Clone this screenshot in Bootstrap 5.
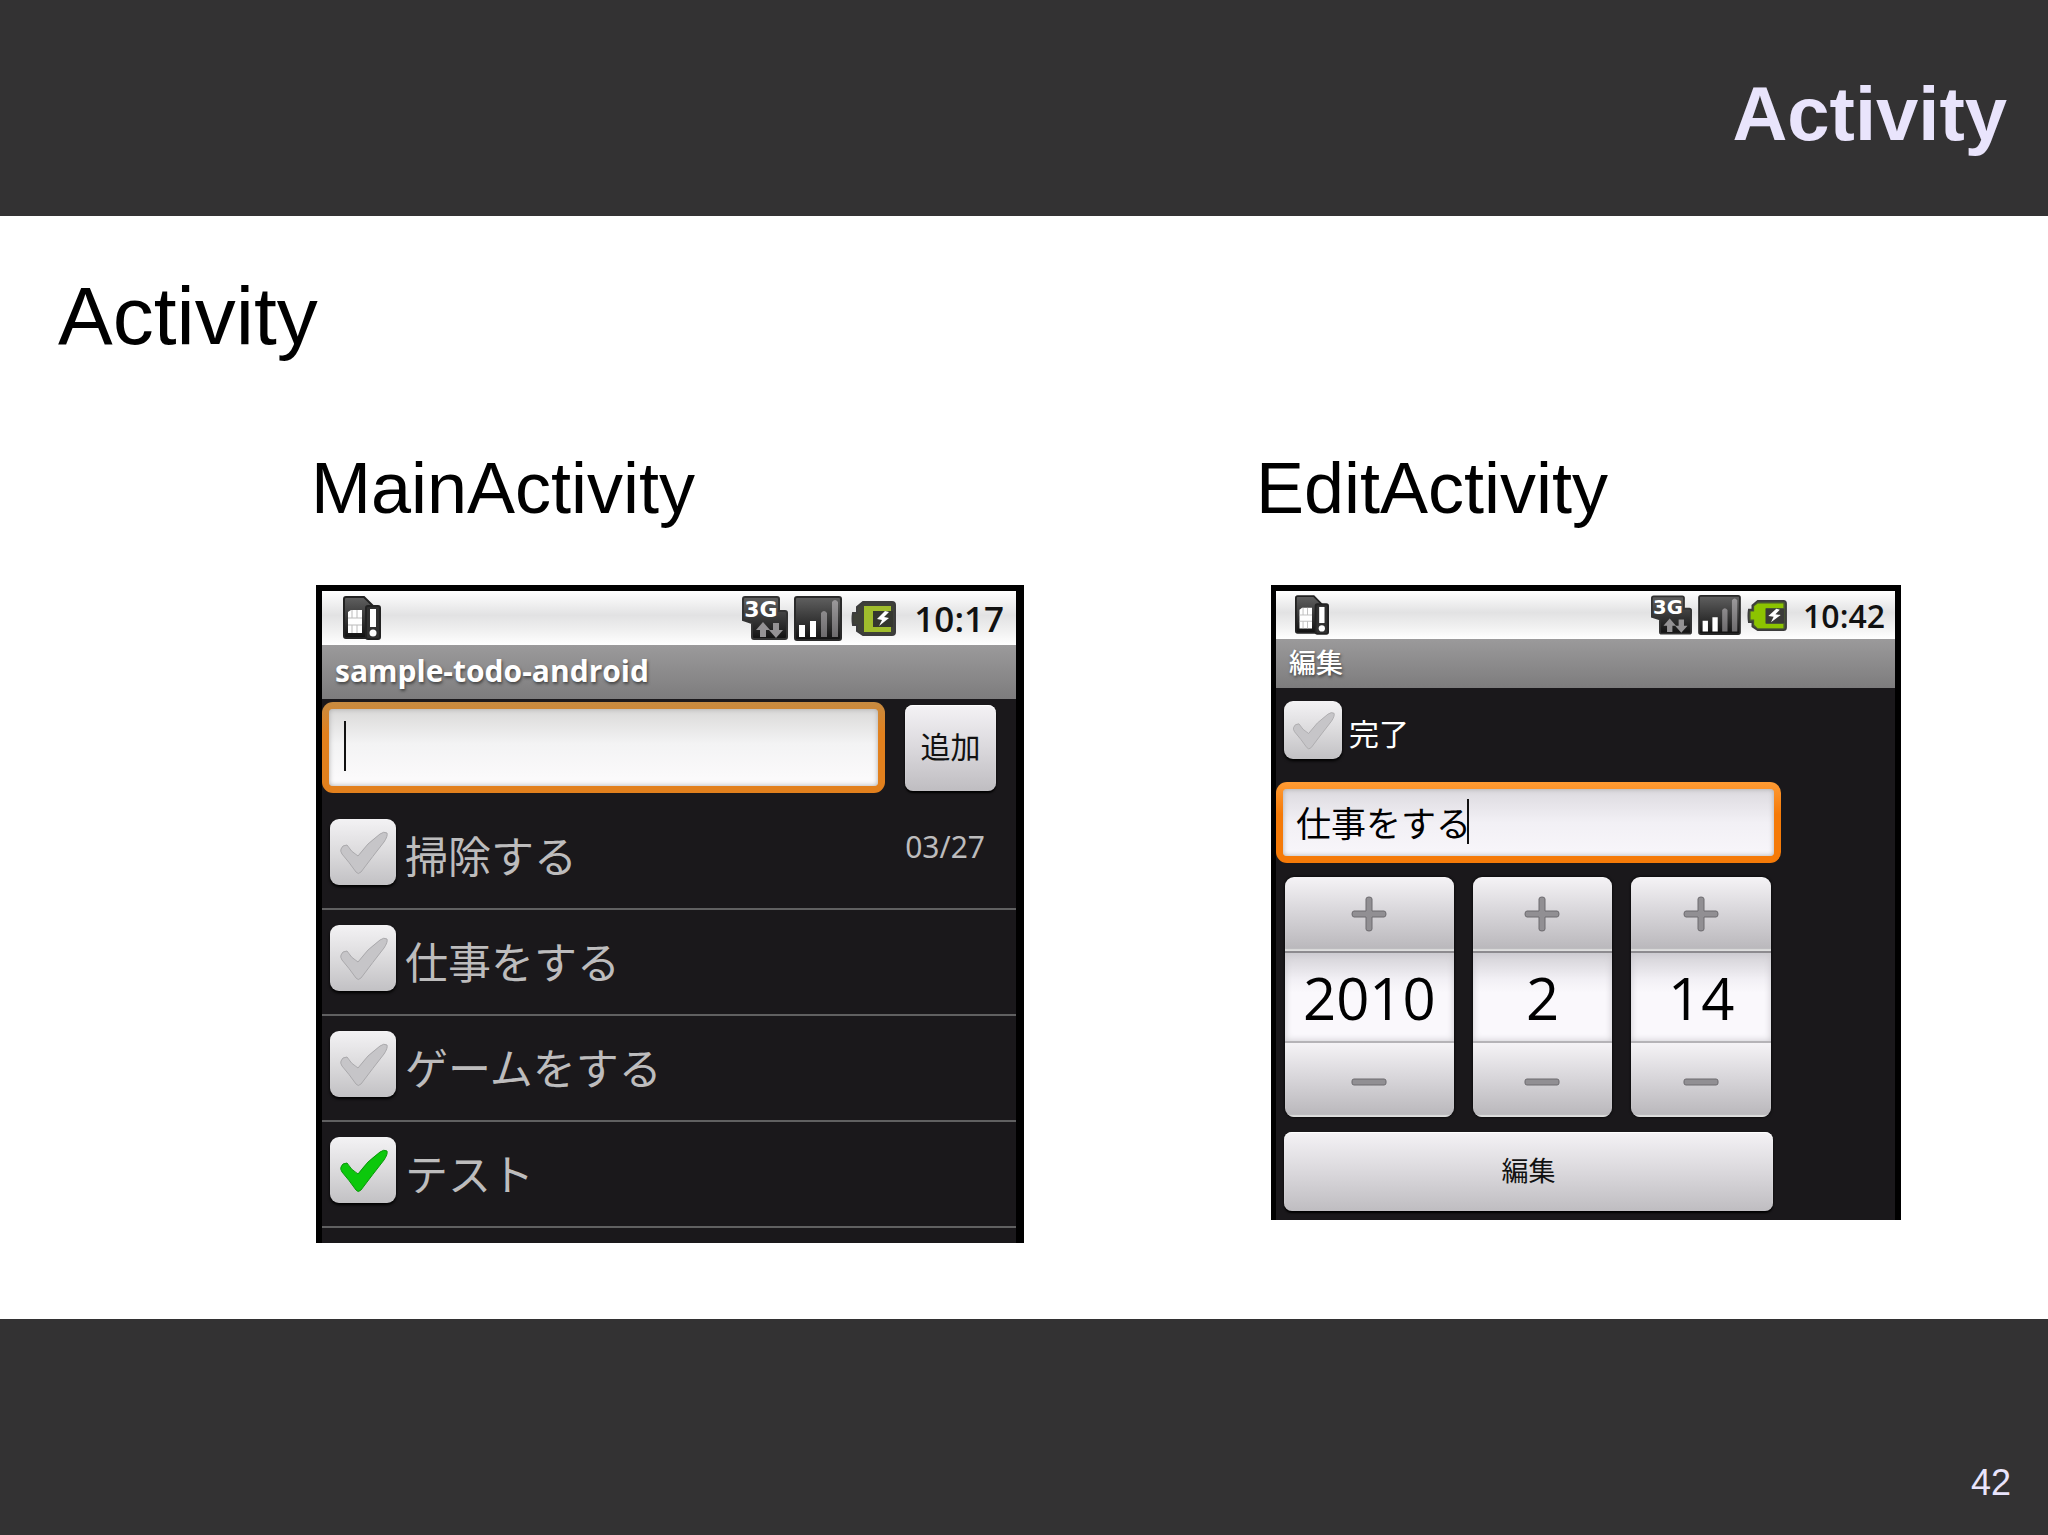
<!DOCTYPE html>
<html lang="ja">
<head>
<meta charset="utf-8">
<meta name="viewport" content="width=device-width, initial-scale=1">
<title>Activity</title>
<link href="https://cdn.jsdelivr.net/npm/bootstrap@5.3.0/dist/css/bootstrap.min.css" rel="stylesheet">
<style>
  body { font-family: "Liberation Sans", Arial, sans-serif; color: #000; background: #fff; }
  .band { background: #333233; color: #e9e4fc; min-height: 216px; }
  .band-top { padding: 70px 41px 0; }
  .band-top h1 { font-size: 76px; line-height: 88px; font-weight: 700; }
  .band-bottom { padding: 0 37px 32px; font-size: 36px; line-height: 40px; }
  .slide-title { font-size: 82px; line-height: 96px; font-weight: 400; padding: 52px 58px 0; margin-bottom: 82px; }
  .screens { padding: 0 147px 0 311px; gap: 232px; }
  .screen-main { flex: 713 1 0; min-width: 0; }
  .screen-edit { flex: 645 1 0; min-width: 0; }
  .caption-text { font-size: 72px; line-height: 84px; font-weight: 400; margin-bottom: 55px; }

  .phone { background: #1a181b; border: 6px solid #000; border-bottom: 0; color: #bdbcbd;
    font-family: "Noto Sans", "Noto Sans CJK JP", sans-serif; }
  .screen-main .phone { margin-left: 5px; border-right-width: 8px; padding-bottom: 15px; }
  .screen-edit .phone { margin-left: 15px; border-left-width: 5px; padding-bottom: 9px; }

  .status { background: linear-gradient(#fff, #e2e2e3 45%, #f1f1f1 75%, #fff); height: 54px; padding: 0 12px 0 21px; gap: 6px; color: #111; }
  .status time { font-family: "Open Sans", sans-serif; font-weight: 600; font-size: 35px; line-height: 40px; margin-left: 12px; padding-top: 2px; }
  .status svg { flex: none; }
  .screen-edit .status { height: 48px; padding: 0 10px 0 19px; }
  .screen-edit .status time { font-size: 32px; margin-left: 10px; }
  .app-title { background: linear-gradient(#9b9a9b, #7d7c7d); height: 54px; padding: 6px 13px 0; color: #fff; font-family: "Open Sans", "Noto Sans CJK JP", sans-serif;
    font-size: 30px; line-height: 40px; font-weight: 700; text-shadow: 1px 2px 3px #444; }
  .screen-edit .app-title { height: 49px; padding-top: 4px; font-size: 27px; font-weight: 500; }

  .entry { display: block; width: 100%; border: 7px solid transparent; border-radius: 11px; outline: 0; color: #000; padding: 0 13px;
    background: linear-gradient(#dad9d8, #f3f3f4 45%, #fbfafb 90%) padding-box, linear-gradient(#c78b41, #e2801d 35%, #e2801d) border-box;
    box-shadow: inset 0 0 5px #aaa; height: 91px; }
  .entry-hot { height: 81px; font-size: 35px; line-height: 48px; padding-bottom: 2px;
    background: linear-gradient(#dcdadf, #f2f0f5 50%, #f8f6fa) padding-box, linear-gradient(#ff9b34, #f57a08 40%, #f57a08) border-box; }
  .caret { position: absolute; width: 2px; background: #111; }
  .caret-a { left: 22px; top: 19px; height: 50px; }
  .caret-b { left: 191px; top: 17px; height: 45px; }
  .entry-row { padding: 3px 20px 0 0; gap: 20px; margin-bottom: 11px; }
  .key { border: 0; border-radius: 8px; color: #111; background: linear-gradient(#f4f2f5, #dddbdf 45%, #bfbdc1); box-shadow: 0 2px 2px #000, inset 0 1px 1px #fff; }
  .key-add { width: 91px; height: 86px; font-size: 30px; padding: 0 0 2px; }

  .task { height: 106px; padding: 0 31px 9px 8px; border-bottom: 2px solid #606061; }
  .task label { font-size: 43px; line-height: 52px; padding: 10px 0 0 9px; }
  .task time { font-size: 30px; line-height: 40px; margin-bottom: 9px; }
  .tick { position: relative; width: 66px; height: 66px; flex: none; }
  .tick input { appearance: none; display: block; width: 100%; height: 100%; margin: 0; border-radius: 9px;
    background: linear-gradient(#f3f2f4, #dcdbdd 50%, #c2c1c4); box-shadow: 0 2px 3px #000; }
  .tick svg { position: absolute; inset: 0; width: 100%; height: 100%; pointer-events: none; fill: #c6c5c8; stroke: #aaa9ac; stroke-width: 1; }
  .tick input:checked + svg { fill: #0cc80c; stroke: #0b970b; stroke-width: 1; }

  .done { padding: 13px 8px 0; margin-bottom: 23px; color: #fff; }
  .done .tick { width: 58px; height: 58px; }
  .done label { font-size: 30px; line-height: 40px; padding: 8px 0 0 7px; }
  .edit-form { width: 505px; max-width: 100%; }
  .pickers { padding: 14px 10px 15px 9px; gap: 19px; }
  .picker { flex: 140 1 0; min-width: 0; border-radius: 9px; overflow: hidden; box-shadow: 0 0 3px #000; }
  .picker-year { flex-grow: 169; }
  .picker button { border: 0; padding: 0; width: 100%; height: 74px; display: flex; align-items: center; justify-content: center;
    background: linear-gradient(#f5f3f6, #d9d7db 45%, #b8b6ba); box-shadow: inset 0 -2px 1px #ddd; }
  .picker button:last-child { padding-top: 4px; }
  .picker input { border: 0; width: 100%; height: 92px; padding: 0; text-align: center; font-family: "Open Sans", sans-serif; font-size: 58px; line-height: 80px; color: #000;
    border-top: 2px solid #8d8b8f; border-bottom: 2px solid #b5b3b7; border-radius: 0;
    background: linear-gradient(#d2d0d5, #f2f0f5 30%, #faf8fc 45%); box-shadow: inset 0 0 7px #c9c7cc; outline: 0; }
  .key-save { display: block; height: 79px; width: calc(100% - 16px); margin: 0 8px; font-size: 27px; padding: 0; }
  .status-gap { margin-left: 3px; }
  @media (max-width: 1200px) {
    .screens { flex-direction: column; padding: 0 24px 48px; gap: 48px; }
    .screen-main, .screen-edit { flex: none; }
  }
</style>
<script src="https://cdn.jsdelivr.net/npm/bootstrap@5.3.0/dist/js/bootstrap.bundle.min.js"></script>
</head>
<body class="d-flex flex-column min-vh-100">

<svg width="0" height="0" class="position-absolute" aria-hidden="true">
  <defs>
    <linearGradient id="ink" x1="0" y1="0" x2="0" y2="1"><stop offset="0" stop-color="#606060"/><stop offset="1" stop-color="#111"/></linearGradient>
    <linearGradient id="bar" x1="0" y1="0" x2="0" y2="1"><stop offset="0" stop-color="#9b999b"/><stop offset="1" stop-color="#6d6b6d"/></linearGradient>
    <symbol id="sim" viewBox="0 0 38 44">
      <path d="M3 1H21L30 10V42H3Q1 42 1 40V3Q1 1 3 1Z" fill="url(#ink)" stroke="#222" stroke-width="2"/>
      <rect x="23" y="10" width="14" height="33" rx="2" fill="#303030" stroke="#222" stroke-width="2"/>
      <path d="M5 16L8 14H19V37H5Z" fill="#fff"/>
      <path d="M5 22H19M5 29H19M9 14V22M14 14V22M9 29V37M14 29V37" stroke="#bbb" fill="none"/>
      <path d="M27 13H33V31H27Z" fill="#fff"/><circle cx="30" cy="37" r="3.500" fill="#fff"/>
    </symbol>
    <symbol id="net" viewBox="0 0 46 44">
      <path d="M3 1H35Q37 1 37 3V15H43Q45 15 45 17V41Q45 43 43 43H12Q10 43 10 41V27L1 24V3Q1 1 3 1Z" fill="url(#ink)" stroke="#333" stroke-width="2"/>
      <text x="19" y="21" text-anchor="middle" font-family="DejaVu Sans" font-weight="700" font-size="22" fill="#fff">3G</text>
      <path d="M21 26L28 34H24V41H18V34H14ZM34 42L27 34H31V27H37V34H41Z" fill="#949294"/>
    </symbol>
    <symbol id="signal" viewBox="0 0 48 45">
      <rect x="1" y="1" width="46" height="43" rx="2" fill="url(#ink)" stroke="#2a2a2a" stroke-width="2"/>
      <path d="M5 29H11V41H5ZM16 25H22V41H16Z" fill="#fff"/>
      <path d="M27 41V17Q30 13 33 17V41ZM38 41V6Q41 2 44 6V41Z" fill="url(#bar)"/>
    </symbol>
    <symbol id="battery-low" viewBox="0 0 45 35">
      <path d="M12 1H41Q44 1 44 4V31Q44 34 41 34H12L6 30V24H2Q1 18 2 12H6V6Z" fill="#3f4138" stroke="#3c3c3c" stroke-width="2"/>
      <path d="M13 5H40V10H22V26H40V31H13Z" fill="#a0bd2c"/>
      <path d="M22 10H42V26H22Z" fill="#35372f"/>
      <path d="M34 10L26 18L31 19L28 25L38 17L33 16L38 11Z" fill="#fff"/>
    </symbol>
    <symbol id="battery-full" viewBox="0 0 45 35">
      <path d="M12 1H41Q44 1 44 4V31Q44 34 41 34H12L6 30V25H2Q1 18 2 11H6V6Z" fill="#4b5a33" stroke="#3c3c3c" stroke-width="2"/>
      <path d="M12 4H41V9H21V27H41V32H12L8 28V22H4V13H8V7Z" fill="#8cc400"/>
      <path d="M21 10H42V26H21Z" fill="#3a3a38"/>
      <path d="M33 10L24 18L30 19L27 25L38 17L32 16L37 11Z" fill="#fff"/>
    </symbol>
    <symbol id="check" viewBox="0 0 66 66">
      <path d="M11 30Q12 26 17 26Q21 33 28 37Q37 24 50 15Q54 12 57 14Q58 17 54 23Q43 37 31 53Q28 56 26 53Q19 43 12 35Q10 32 11 30Z"/>
    </symbol>
    <symbol id="plus" viewBox="0 0 36 36">
      <path d="M15 3Q15 1 18 1Q21 1 21 3V15H33Q35 15 35 18Q35 21 33 21H21V33Q21 35 18 35Q15 35 15 33V21H3Q1 21 1 18Q1 15 3 15H15Z" fill="#918f93" stroke="#6d6b6f"/>
    </symbol>
    <symbol id="minus" viewBox="0 0 36 8">
      <rect x="1" y="1" width="34" height="6" rx="2" fill="#918f93" stroke="#6d6b6f"/>
    </symbol>
  </defs>
</svg>

<header class="band band-top text-end"><h1 class="mb-0">Activity</h1></header>

<main class="flex-grow-1">
  <h2 class="slide-title">Activity</h2>
  <div class="screens d-flex align-items-start">

    <section class="screen-main">
      <h3 class="caption-text">MainActivity</h3>
      <div class="phone">
        <div class="status d-flex align-items-center">
          <svg class="me-auto" width="38" height="44"><use href="#sim"/></svg>
          <svg width="46" height="44"><use href="#net"/></svg>
          <svg width="48" height="45"><use href="#signal"/></svg>
          <svg class="status-gap" width="45" height="35"><use href="#battery-low"/></svg>
          <time>10:17</time>
        </div>
        <div class="app-title">sample-todo-android</div>
        <form class="entry-row d-flex align-items-center">
          <div class="position-relative flex-grow-1">
            <input class="entry" type="text" aria-label="タスク">
            <span class="caret caret-a"></span>
          </div>
          <button class="key key-add" type="button">追加</button>
        </form>
        <ul class="list-unstyled mb-0">
          <li class="task d-flex align-items-center">
            <span class="tick"><input type="checkbox" id="t1"><svg><use href="#check"/></svg></span>
            <label for="t1">掃除する</label><time class="ms-auto">03/27</time>
          </li>
          <li class="task d-flex align-items-center">
            <span class="tick"><input type="checkbox" id="t2"><svg><use href="#check"/></svg></span>
            <label for="t2">仕事をする</label>
          </li>
          <li class="task d-flex align-items-center">
            <span class="tick"><input type="checkbox" id="t3"><svg><use href="#check"/></svg></span>
            <label for="t3">ゲームをする</label>
          </li>
          <li class="task d-flex align-items-center">
            <span class="tick"><input type="checkbox" id="t4" checked><svg><use href="#check"/></svg></span>
            <label for="t4">テスト</label>
          </li>
        </ul>
      </div>
    </section>

    <section class="screen-edit">
      <h3 class="caption-text">EditActivity</h3>
      <div class="phone">
        <div class="status d-flex align-items-center">
          <svg class="me-auto" width="34" height="40"><use href="#sim"/></svg>
          <svg width="41" height="40"><use href="#net"/></svg>
          <svg width="43" height="40"><use href="#signal"/></svg>
          <svg width="40" height="31"><use href="#battery-full"/></svg>
          <time>10:42</time>
        </div>
        <div class="app-title">編集</div>
        <form class="edit-form">
          <div class="done d-flex align-items-center">
            <span class="tick"><input type="checkbox" id="d1"><svg><use href="#check"/></svg></span>
            <label for="d1">完了</label>
          </div>
          <div class="position-relative">
            <input class="entry entry-hot" type="text" value="仕事をする" aria-label="タスク">
            <span class="caret caret-b"></span>
          </div>
          <div class="pickers d-flex">
            <div class="picker picker-year">
              <button type="button" aria-label="+"><svg width="36" height="36"><use href="#plus"/></svg></button>
              <input type="text" value="2010" aria-label="年">
              <button type="button" aria-label="-"><svg width="36" height="8"><use href="#minus"/></svg></button>
            </div>
            <div class="picker">
              <button type="button" aria-label="+"><svg width="36" height="36"><use href="#plus"/></svg></button>
              <input type="text" value="2" aria-label="月">
              <button type="button" aria-label="-"><svg width="36" height="8"><use href="#minus"/></svg></button>
            </div>
            <div class="picker">
              <button type="button" aria-label="+"><svg width="36" height="36"><use href="#plus"/></svg></button>
              <input type="text" value="14" aria-label="日">
              <button type="button" aria-label="-"><svg width="36" height="8"><use href="#minus"/></svg></button>
            </div>
          </div>
          <button class="key key-save" type="button">編集</button>
        </form>
      </div>
    </section>
  </div>
</main>

<footer class="band band-bottom d-flex justify-content-end align-items-end">42</footer>
</body>
</html>
